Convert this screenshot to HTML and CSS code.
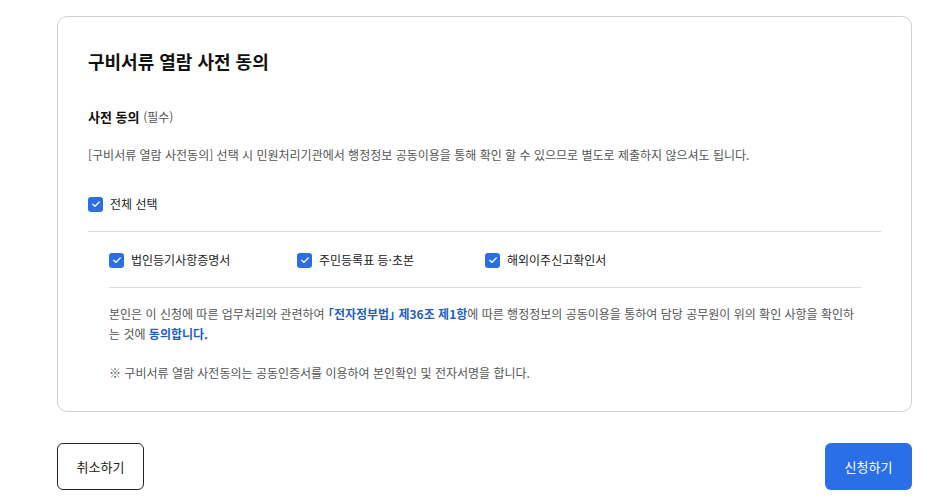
FILE: index.html
```html
<!DOCTYPE html>
<html lang="ko">
<head>
<meta charset="utf-8">
<link rel="stylesheet" href="styles.css">
</head>
<body>
<div class="page">
  <section class="card">
    <h2 class="title">구비서류 열람 사전 동의</h2>
    <h3 class="subhead">사전 동의 <span class="req">(필수)</span></h3>
    <p class="desc">[구비서류 열람 사전동의] 선택 시 민원처리기관에서 행정정보 공동이용을 통해 확인 할 수 있으므로 별도로 제출하지 않으셔도 됩니다.</p>
    <label class="check all"><span class="box"><svg viewBox="0 0 16 16" width="16" height="16"><path d="M4.3 8.2l2.5 2.5 4.9-5" fill="none" stroke="#fff" stroke-width="1.5" stroke-linecap="round" stroke-linejoin="round"/></svg></span>전체 선택</label>
    <div class="divider"></div>
    <div class="sub">
      <div class="items">
        <label class="check"><span class="box"><svg viewBox="0 0 16 16" width="16" height="16"><path d="M4.3 8.2l2.5 2.5 4.9-5" fill="none" stroke="#fff" stroke-width="1.5" stroke-linecap="round" stroke-linejoin="round"/></svg></span>법인등기사항증명서</label>
        <label class="check"><span class="box"><svg viewBox="0 0 16 16" width="16" height="16"><path d="M4.3 8.2l2.5 2.5 4.9-5" fill="none" stroke="#fff" stroke-width="1.5" stroke-linecap="round" stroke-linejoin="round"/></svg></span>주민등록표 등·초본</label>
        <label class="check"><span class="box"><svg viewBox="0 0 16 16" width="16" height="16"><path d="M4.3 8.2l2.5 2.5 4.9-5" fill="none" stroke="#fff" stroke-width="1.5" stroke-linecap="round" stroke-linejoin="round"/></svg></span>해외이주신고확인서</label>
      </div>
      <div class="divider"></div>
      <p class="para">본인은 이 신청에 따른 업무처리와 관련하여 <strong><span class="br">「</span>전자정부법<span class="br">」</span> 제36조 제1항</strong>에 따른 행정정보의 공동이용을 통하여 담당 공무원이 위의 확인 사항을 확인하는 것에 <strong>동의합니다.</strong></p>
      <p class="note">※ 구비서류 열람 사전동의는 공동인증서를 이용하여 본인확인 및 전자서명을 합니다.</p>
    </div>
  </section>
  <div class="actions">
    <button class="btn cancel">취소하기</button>
    <button class="btn submit">신청하기</button>
  </div>
</div>
</body>
</html>
```
FILE: styles.css
```css
* { box-sizing: border-box; }
html, body { margin: 0; padding: 0; background: #fff; }
body {
  font-family: "Noto Sans CJK KR", "Noto Sans", sans-serif;
  color: #333;
}
.page {
  width: 855px;
  margin-left: 57px;
  padding-top: 16px;
}
.card {
  border: 1px solid #cfcfcf;
  border-radius: 10px;
  padding: 30px 30px 28px 30px;
}
.title {
  margin: 0;
  font-size: 18px;
  line-height: 28px;
  font-weight: 700;
  color: #111;
}
.subhead {
  margin: 32px 0 0;
  font-size: 13px;
  line-height: 20px;
  font-weight: 700;
  color: #111;
}
.req {
  font-size: 12px;
  font-weight: 400;
  color: #555;
}
.desc {
  margin: 18px 0 0;
  font-size: 12px;
  line-height: 20px;
  color: #555;
}
.check {
  display: flex;
  align-items: center;
  gap: 7px;
  font-size: 12px;
  line-height: 20px;
  color: #222;
}
.all { margin-top: 29px; }
.box {
  width: 15px;
  height: 15px;
  border-radius: 3px;
  background: #2c6fe5;
  display: flex;
  align-items: center;
  justify-content: center;
}
.box svg { width: 14px; height: 14px; }
.divider {
  height: 1px;
  background: #dcdcdc;
  margin-top: 17px;
}
.sub { padding: 0 20px 0 21px; }
.items {
  margin-top: 18px;
  display: grid;
  grid-template-columns: 188px 188px 188px;
}
.para {
  margin: 16px 0 0;
  font-size: 12px;
  line-height: 20px;
  color: #555;
}
.para strong { color: #1f5fc4; font-weight: 700; }
.br { font-feature-settings: "halt" 1; }
.note {
  margin: 19px 0 0;
  font-size: 12px;
  line-height: 20px;
  color: #555;
}
.actions {
  margin-top: 31px;
  display: flex;
  justify-content: space-between;
}
.btn {
  width: 87px;
  height: 47px;
  border-radius: 6px;
  font-family: inherit;
  font-size: 13px;
  cursor: pointer;
}
.cancel {
  background: #fff;
  border: 1px solid #222;
  color: #222;
}
.submit {
  background: #2a6fe8;
  border: none;
  color: #fff;
}
```
